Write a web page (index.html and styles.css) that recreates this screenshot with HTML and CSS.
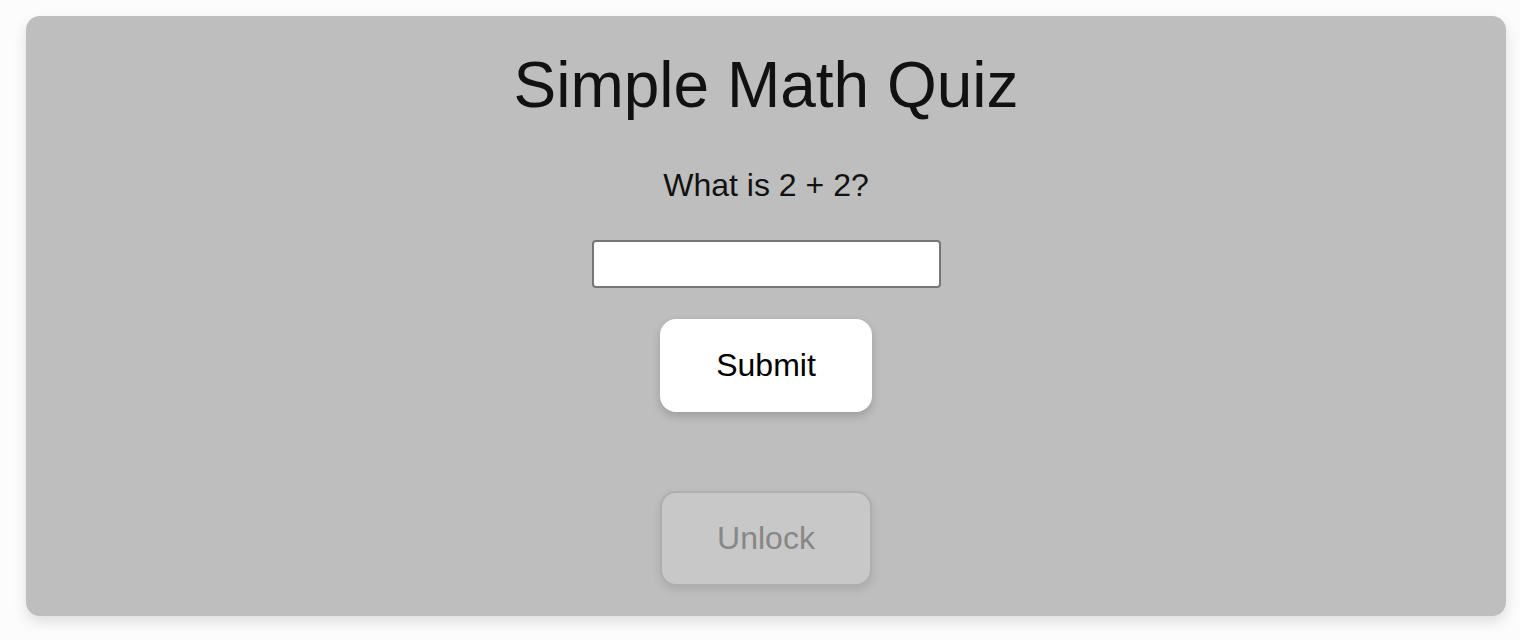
FILE: index.html
```html
<!DOCTYPE html>
<html lang="en">
<head>
<meta charset="utf-8">
<title>Simple Math Quiz</title>
<link rel="stylesheet" href="styles.css">
</head>
<body>
  <main class="card">
    <h1 class="title">Simple Math Quiz</h1>
    <p class="question">What is 2 + 2?</p>
    <input class="answer" type="text" aria-label="Answer">
    <button class="btn btn-submit" type="button">Submit</button>
    <button class="btn btn-unlock" type="button" disabled>Unlock</button>
  </main>
</body>
</html>
```
FILE: styles.css
```css
html, body {
  margin: 0;
  padding: 0;
  background: #fcfcfc;
  font-family: "Liberation Sans", Arial, sans-serif;
}

body {
  padding: 16px 14px 0 26px;
  height: 640px;
  box-sizing: border-box;
  overflow: hidden;
}

.card {
  height: 600px;
  box-sizing: border-box;
  background: #bebebe;
  border-radius: 14px;
  box-shadow: 0 6px 14px rgba(0, 0, 0, 0.12);
  display: flex;
  flex-direction: column;
  align-items: center;
  padding: 33px 0 30px;
}

.title {
  margin: 0;
  font-size: 64px;
  line-height: 72px;
  font-weight: 400;
  color: #111;
}

.question {
  margin: 46px 0 0;
  font-size: 32px;
  line-height: 37px;
  color: #111;
}

.answer {
  margin: 36px 0 0;
  width: 349px;
  height: 48px;
  box-sizing: border-box;
  border: 2px solid #767676;
  border-radius: 4px;
  background: #fff;
  font-size: 24px;
  font-family: inherit;
  padding: 0 8px;
}

.btn {
  width: 212px;
  box-sizing: border-box;
  font-family: inherit;
  font-size: 32px;
  border-radius: 16px;
  padding: 0;
}

.btn-submit {
  margin-top: 31px;
  height: 93px;
  background: #fff;
  color: #000;
  border: none;
  box-shadow: 0 4px 10px rgba(0, 0, 0, 0.18);
}

.btn-unlock {
  margin-top: 79px;
  height: 95px;
  background: #c8c8c8;
  color: #878787;
  border: 2px solid #aeaeae;
  box-shadow: 0 4px 10px rgba(0, 0, 0, 0.1);
}
```
